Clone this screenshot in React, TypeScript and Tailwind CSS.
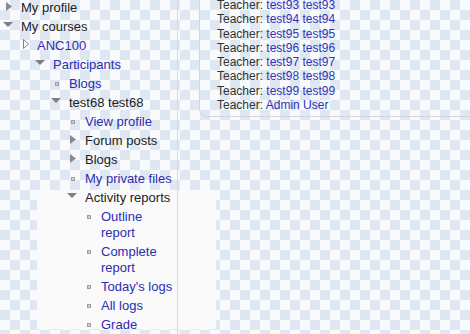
type Icon = "open" | "closed" | "hollow" | "leaf"

type NavItem = {
  title: string
  icon: Icon
  level: number
  link?: boolean
}

const nav: NavItem[] = [
  { title: "My profile", icon: "closed", level: 0 },
  { title: "My courses", icon: "open", level: 0 },
  { title: "ANC100", icon: "hollow", level: 1, link: true },
  { title: "Participants", icon: "open", level: 2, link: true },
  { title: "Blogs", icon: "leaf", level: 3, link: true },
  { title: "test68 test68", icon: "open", level: 3 },
  { title: "View profile", icon: "leaf", level: 4, link: true },
  { title: "Forum posts", icon: "closed", level: 4 },
  { title: "Blogs", icon: "closed", level: 4 },
  { title: "My private files", icon: "leaf", level: 4, link: true },
  { title: "Activity reports", icon: "open", level: 4 },
  { title: "Outline report", icon: "leaf", level: 5, link: true },
  { title: "Complete report", icon: "leaf", level: 5, link: true },
  { title: "Today's logs", icon: "leaf", level: 5, link: true },
  { title: "All logs", icon: "leaf", level: 5, link: true },
  { title: "Grade", icon: "leaf", level: 5, link: true },
]

// padding per tree level, 16px steps
const indent = ["pl-[3px]", "pl-[19px]", "pl-[35px]", "pl-[51px]", "pl-[67px]", "pl-[83px]"]

const teachers = [
  "test93 test93",
  "test94 test94",
  "test95 test95",
  "test96 test96",
  "test97 test97",
  "test98 test98",
  "test99 test99",
  "Admin User",
]

function TreeIcon({ type }: { type: Icon }) {
  if (type === "open")
    return (
      <svg width="10" height="5" viewBox="0 0 10 5" className="mt-[3.5px]">
        <polygon points="0,0 10,0 5,5" fill="#7f7f7f" />
      </svg>
    )
  if (type === "closed")
    return (
      <svg width="6" height="9" viewBox="0 0 6 9" className="ml-[2.5px] mt-[2.5px]">
        <polygon points="0,0 6,4.5 0,9" fill="#8a8a8a" />
      </svg>
    )
  if (type === "hollow")
    return (
      <svg width="6" height="10" viewBox="0 0 6 10" className="ml-[3.5px] mt-[1px]">
        <polygon points="0.5,0.5 5.5,5 0.5,9.5" fill="none" stroke="#808080" strokeWidth="1" />
      </svg>
    )
  return <span className="ml-[4px] mt-[6.5px] block h-[4px] w-[4px] border border-[#a0a0a0] bg-[#cfcfcf]" />
}

export default function App() {
  return (
    <div
      className="relative h-[334px] w-[470px] overflow-hidden bg-[repeating-conic-gradient(#dfe8f2_0_25%,#f9fafc_0_50%)] bg-[length:20px_20px]"
      style={{ fontFamily: '"Liberation Sans", Arial, sans-serif' }}
    >
      <div className="absolute left-[37px] top-[190px] h-[139px] w-[179px] bg-[#fafafa]" />

      <div className="relative -mt-[2px] flex items-start">
        <ul className="w-[178px] shrink-0 border-r border-[#d6d9dd] pb-[20px]">
          {nav.map((item, i) => (
            <li
              key={i}
              className={`flex items-start py-[1.5px] text-[13px] leading-[16px] ${indent[item.level]}`}
            >
              <span className="flex h-[16px] w-[18px] shrink-0 items-start">
                <TreeIcon type={item.icon} />
              </span>
              <span className={item.link ? "text-[#2d2db2]" : "text-[#222]"}>{item.title}</span>
            </li>
          ))}
        </ul>

        <div className="ml-[21px] flex-1 rounded-bl-[8px] border-b border-l border-[#d3d7dc] pb-[4px] pl-[17px]">
          {teachers.map((name) => (
            <div key={name} className="text-[12px] leading-[14.3px] text-[#333]">
              Teacher: <span className="text-[#3333b8]">{name}</span>
            </div>
          ))}
        </div>
      </div>
    </div>
  )
}
